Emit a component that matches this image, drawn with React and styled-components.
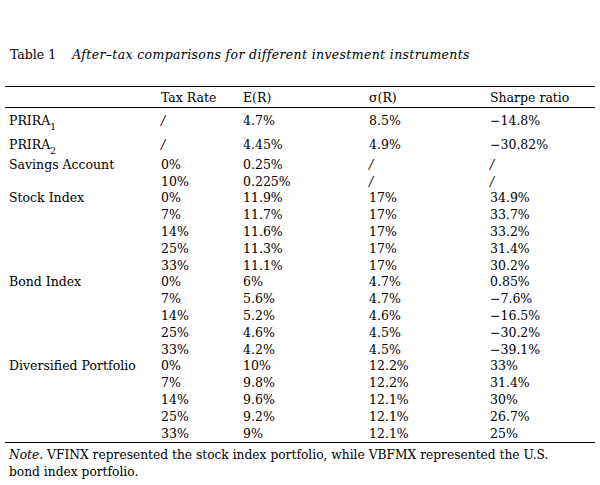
import styled, { createGlobalStyle } from "styled-components";

const GlobalStyle = createGlobalStyle`
  body {
    margin: 0;
    background: #fff;
    color: #000;
    font-family: "DejaVu Serif", "Liberation Serif", serif;
  }
`;

const rows = [
  { label: "PRIRA", sub: "1", tax: "/", er: "4.7%", sd: "8.5%", sharpe: "−14.8%", tall: true },
  { label: "PRIRA", sub: "2", tax: "/", er: "4.45%", sd: "4.9%", sharpe: "−30.82%", tall: true },
  { label: "Savings Account", tax: "0%", er: "0.25%", sd: "/", sharpe: "/" },
  { tax: "10%", er: "0.225%", sd: "/", sharpe: "/" },
  { label: "Stock Index", tax: "0%", er: "11.9%", sd: "17%", sharpe: "34.9%" },
  { tax: "7%", er: "11.7%", sd: "17%", sharpe: "33.7%" },
  { tax: "14%", er: "11.6%", sd: "17%", sharpe: "33.2%" },
  { tax: "25%", er: "11.3%", sd: "17%", sharpe: "31.4%" },
  { tax: "33%", er: "11.1%", sd: "17%", sharpe: "30.2%" },
  { label: "Bond Index", tax: "0%", er: "6%", sd: "4.7%", sharpe: "0.85%" },
  { tax: "7%", er: "5.6%", sd: "4.7%", sharpe: "−7.6%" },
  { tax: "14%", er: "5.2%", sd: "4.6%", sharpe: "−16.5%" },
  { tax: "25%", er: "4.6%", sd: "4.5%", sharpe: "−30.2%" },
  { tax: "33%", er: "4.2%", sd: "4.5%", sharpe: "−39.1%" },
  { label: "Diversified Portfolio", tax: "0%", er: "10%", sd: "12.2%", sharpe: "33%" },
  { tax: "7%", er: "9.8%", sd: "12.2%", sharpe: "31.4%" },
  { tax: "14%", er: "9.6%", sd: "12.1%", sharpe: "30%" },
  { tax: "25%", er: "9.2%", sd: "12.1%", sharpe: "26.7%" },
  { tax: "33%", er: "9%", sd: "12.1%", sharpe: "25%" },
];

const Page = styled.div`
  width: 600px;
  height: 485px;
  padding: 46px 5px 0 5px;
  box-sizing: border-box;
  font-size: 12.5px;
`;

const Caption = styled.div`
  display: flex;
  gap: 16px;
  padding-left: 5px;
  line-height: 17px;
`;

const CaptionText = styled.span`
  font-style: italic;
  letter-spacing: 0.35px;
`;

const Table = styled.div`
  margin-top: 23px;
  border-top: 1px solid #000;
  border-bottom: 1px solid #000;
`;

const Row = styled.div`
  display: grid;
  grid-template-columns: 152px 82px 126px 121px 1fr;
  align-items: center;
  height: ${(p) => p.$h}px;
  padding-left: 4px;
  border-bottom: ${(p) => (p.$rule ? "1px solid #000" : "none")};
  white-space: nowrap;
`;

const Slash = styled.span`
  font-style: italic;
`;

const Sub = styled.sub`
  font-size: 9px;
  vertical-align: -5px;
  line-height: 0;
`;

const Note = styled.div`
  padding: 4px 4px 0;
  font-size: 12.25px;
  line-height: 17px;
`;

const Cell = ({ v }) => (v === "/" ? <Slash>/</Slash> : <span>{v}</span>);

export default function App() {
  return (
    <Page>
      <GlobalStyle />
      <Caption>
        <span>Table 1</span>
        <CaptionText>After–tax comparisons for different investment instruments</CaptionText>
      </Caption>
      <Table>
        <Row $h={20} $rule>
          <span />
          <span>Tax Rate</span>
          <span>E(R)</span>
          <span>σ(R)</span>
          <span>Sharpe ratio</span>
        </Row>
        {rows.map((r, i) => (
          <Row key={i} $h={r.tall ? 24 : 16.8}>
            <span>
              {r.label}
              {r.sub && <Sub>{r.sub}</Sub>}
            </span>
            <Cell v={r.tax} />
            <Cell v={r.er} />
            <Cell v={r.sd} />
            <Cell v={r.sharpe} />
          </Row>
        ))}
      </Table>
      <Note>
        <i>Note.</i> VFINX represented the stock index portfolio, while VBFMX represented the U.S.
        <br />
        bond index portfolio.
      </Note>
    </Page>
  );
}
